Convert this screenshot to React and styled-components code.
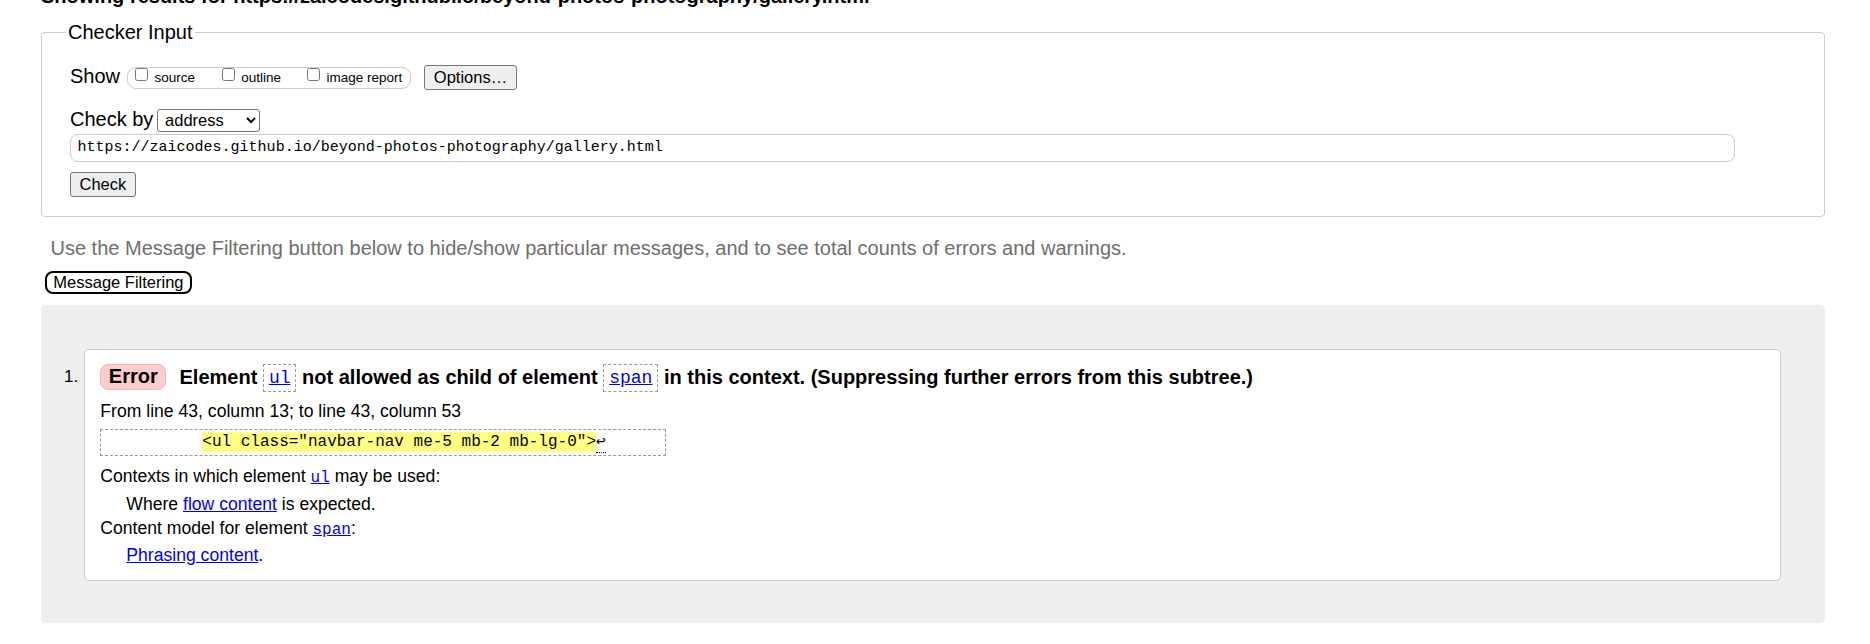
import React from "react";
import styled, { createGlobalStyle } from "styled-components";

const GlobalStyle = createGlobalStyle`
  html, body { margin: 0; padding: 0; background: #fff; }
  body {
    font-family: "Liberation Sans", Arial, sans-serif;
    color: #000;
    overflow: hidden;
  }
`;

const MONO = `"Liberation Mono", "DejaVu Sans Mono", monospace`;

const Header = styled.h2`
  margin: -16px 0 0 41px;
  font-size: 20px;
  line-height: 24px;
  font-weight: bold;
  white-space: nowrap;
`;

const Fieldset = styled.fieldset`
  margin: 12.5px 45px 0 41px;
  padding: 0 28px 18.6px 28px;
  border: 1px solid #cccccc;
  border-radius: 4px;
  min-width: 0;
`;

const Legend = styled.legend`
  margin-left: -4px;
  padding: 0 2px;
  font-size: 20px;
  line-height: 23px;
`;

const Row = styled.div`
  display: flex;
  align-items: flex-start;
  margin-top: ${(p) => p.$mt}px;
`;

const FieldLabel = styled.span`
  font-size: 20px;
  line-height: 23px;
  margin-right: ${(p) => p.$mr}px;
  white-space: nowrap;
`;

const OptionGroup = styled.div`
  display: flex;
  align-items: flex-start;
  box-sizing: border-box;
  height: 22.6px;
  margin-top: 1.4px;
  padding: 0 8px 0 7.3px;
  border: 1px solid #cccccc;
  border-radius: 9px;
`;

const OptionItem = styled.label`
  display: flex;
  align-items: flex-start;
  margin-left: ${(p) => p.$ml || 0}px;
`;

const CheckBox = styled.input.attrs({ type: "checkbox" })`
  margin: 0;
  width: 13px;
  height: 13px;
`;

const OptionText = styled.span`
  font-size: 13.5px;
  line-height: 16px;
  margin: 2.3px 0 0 6.5px;
  white-space: nowrap;
`;

const Button = styled.button`
  box-sizing: border-box;
  height: 25px;
  margin-left: ${(p) => p.$ml || 0}px;
  padding: 0 8.5px;
  font-family: "Liberation Sans", Arial, sans-serif;
  font-size: 16.5px;
  line-height: 23px;
  color: #000;
  background: #efefef;
  border: 1px solid #767676;
  border-radius: 3px;
`;

const Select = styled.select`
  box-sizing: border-box;
  width: 103.3px;
  height: 22.4px;
  margin-top: 1.7px;
  padding: 0 0 0 3px;
  font-family: "Liberation Sans", Arial, sans-serif;
  font-size: 16.5px;
  color: #000;
  background: #fff;
  border: 1px solid #767676;
  border-radius: 3px;
`;

const UrlInput = styled.input`
  display: block;
  box-sizing: border-box;
  width: 1665px;
  height: 27.7px;
  padding: 0 6.6px;
  font-family: ${MONO};
  font-size: 15px;
  color: #000;
  border: 1px solid #cccccc;
  border-radius: 8px;
  outline: none;
`;

const Hint = styled.p`
  margin: 20.3px 0 0 50.5px;
  font-size: 20px;
  line-height: 23px;
  color: #6e6e6e;
  white-space: nowrap;
`;

const FilterButton = styled.button`
  display: block;
  box-sizing: border-box;
  height: 23.3px;
  margin: 11px 0 0 45.3px;
  padding: 0 6px;
  font-family: "Liberation Sans", Arial, sans-serif;
  font-size: 16.5px;
  line-height: 19.3px;
  color: #000;
  background: #fff;
  border: 2px solid #000;
  border-radius: 8px;
`;

const Results = styled.ol`
  list-style: none;
  margin: 11px 45px 0 41px;
  padding: 43.3px 44.3px 41.7px 0;
  background: #eeeeee;
  border-radius: 5px;
`;

const ResultItem = styled.li`
  display: flex;
  align-items: flex-start;
`;

const ItemNumber = styled.span`
  flex-shrink: 0;
  box-sizing: border-box;
  width: 43.3px;
  margin-top: 19.5px;
  padding-right: 6px;
  text-align: right;
  font-size: 17px;
  line-height: 18px;
`;

const MessageBox = styled.div`
  flex: 1;
  background: #fff;
  border: 1px solid #cccccc;
  border-radius: 5px;
  padding: 12.3px 15px 12.5px 15px;
  font-size: 17.6px;
`;

const Heading = styled.p`
  display: flex;
  align-items: center;
  margin: 0;
  font-size: 20px;
  font-weight: bold;
  line-height: 30px;
  white-space: nowrap;
`;

const Badge = styled.strong`
  display: inline-block;
  box-sizing: border-box;
  height: 25.4px;
  line-height: 23.4px;
  padding: 0 7.5px;
  margin-right: 13.3px;
  background: #ffcccc;
  border: 1px solid #f2b8b8;
  border-radius: 8px;
`;

const HeadCode = styled.code`
  display: inline-block;
  padding: 0 5px;
  font-family: ${MONO};
  font-size: 18px;
  font-weight: normal;
  line-height: 26px;
  vertical-align: 1px;
  border: 1px dashed #999;
`;

const Link = styled.a`
  color: #0000ee;
  text-decoration: underline;
`;

const FromLine = styled.p`
  margin: 7.6px 0 0;
  font-size: 17.6px;
  line-height: 22px;
`;

const Extract = styled.div`
  width: fit-content;
  margin-top: 7.4px;
  padding: 2.2px 11px 2.2px 5px;
  font-family: ${MONO};
  font-size: 16px;
  line-height: 20px;
  white-space: pre;
  border: 1px dashed #999;
`;

const Mark = styled.mark`
  display: inline-block;
  background: #ffff80;
  color: #000;
  line-height: 20px;
`;

const LineFeed = styled.span`
  display: inline-block;
  line-height: 19px;
  border-bottom: 1px dotted #000;
`;

const DefList = styled.dl`
  margin: 8px 0 0;
  font-size: 17.6px;
`;

const Term = styled.dt`
  line-height: 24px;
`;

const Desc = styled.dd`
  margin: ${(p) => p.$mt}px 0 0 26px;
  line-height: 24px;
`;

const InlineCode = styled.code`
  font-family: ${MONO};
  font-size: 16px;
`;

export default function App() {
  return (
    <>
      <GlobalStyle />
      <Header>
        Showing results for https://zaicodes.github.io/beyond-photos-photography/gallery.html
      </Header>

      <Fieldset>
        <Legend>Checker Input</Legend>
        <Row $mt={21.8}>
          <FieldLabel $mr={6.7}>Show</FieldLabel>
          <OptionGroup>
            <OptionItem>
              <CheckBox />
              <OptionText>source</OptionText>
            </OptionItem>
            <OptionItem $ml={26.7}>
              <CheckBox />
              <OptionText>outline</OptionText>
            </OptionItem>
            <OptionItem $ml={26}>
              <CheckBox />
              <OptionText>image report</OptionText>
            </OptionItem>
          </OptionGroup>
          <Button $ml={13}>Options…</Button>
        </Row>
        <Row $mt={17.3}>
          <FieldLabel $mr={3.7}>Check by</FieldLabel>
          <Select defaultValue="address">
            <option value="address">address</option>
            <option value="file">file upload</option>
            <option value="text">text input</option>
          </Select>
        </Row>
        <Row $mt={2.3}>
          <UrlInput
            type="url"
            defaultValue="https://zaicodes.github.io/beyond-photos-photography/gallery.html"
          />
        </Row>
        <Row $mt={10.6}>
          <Button>Check</Button>
        </Row>
      </Fieldset>

      <Hint>
        Use the Message Filtering button below to hide/show particular messages, and to see total counts of errors and warnings.
      </Hint>
      <FilterButton>Message Filtering</FilterButton>

      <Results>
        <ResultItem>
          <ItemNumber>1.</ItemNumber>
          <MessageBox>
            <Heading>
              <Badge>Error</Badge>
              <span>
                Element{" "}
                <HeadCode>
                  <Link href="#ul">ul</Link>
                </HeadCode>{" "}
                not allowed as child of element{" "}
                <HeadCode>
                  <Link href="#span">span</Link>
                </HeadCode>{" "}
                in this context. (Suppressing further errors from this subtree.)
              </span>
            </Heading>
            <FromLine>From line 43, column 13; to line 43, column 53</FromLine>
            <Extract>
              {"          "}
              <Mark>{'<ul class="navbar-nav me-5 mb-2 mb-lg-0">'}</Mark>
              <LineFeed>↩</LineFeed>
              {"     "}
            </Extract>
            <DefList>
              <Term>
                Contexts in which element{" "}
                <InlineCode>
                  <Link href="#ul">ul</Link>
                </InlineCode>{" "}
                may be used:
              </Term>
              <Desc $mt={2}>
                Where <Link href="#flow">flow content</Link> is expected.
              </Desc>
              <Term>
                Content model for element{" "}
                <InlineCode>
                  <Link href="#span">span</Link>
                </InlineCode>
                :
              </Term>
              <Desc $mt={1}>
                <Link href="#phrasing">Phrasing content</Link>.
              </Desc>
            </DefList>
          </MessageBox>
        </ResultItem>
      </Results>
    </>
  );
}
